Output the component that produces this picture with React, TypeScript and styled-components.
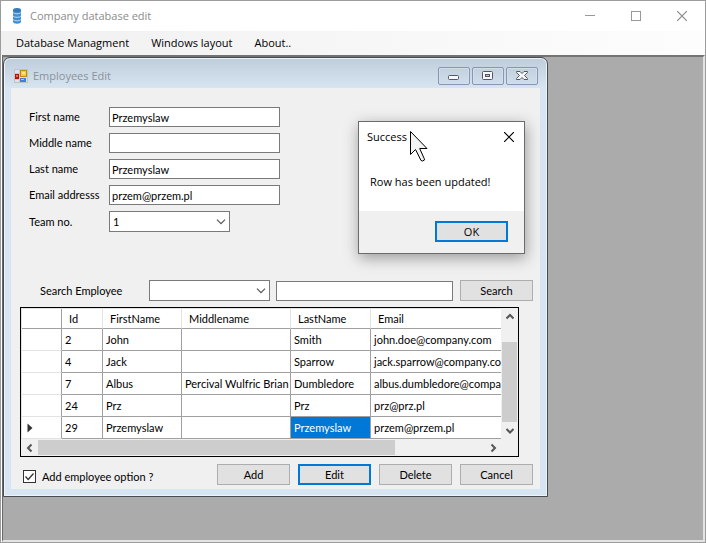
import React, { useState } from 'react';
import styled, { createGlobalStyle, css } from 'styled-components';

const GlobalStyle = createGlobalStyle`
  *, *::before, *::after { box-sizing: border-box; }
  body { margin: 0; }
  body, button, input, select, table {
    font-family: Lato, "Liberation Sans", sans-serif;
    font-size: 11px;
    line-height: 14px;
    color: #000;
  }
`;

const systemFont = css`
  font-family: "Open Sans", "Noto Sans", sans-serif;
`;

const AppFrame = styled.div`
  display: flex;
  flex-direction: column;
  min-height: 100vh;
  border: 1px solid #9c9c9c;
  background: #fff;
`;

const TitleBar = styled.header`
  ${systemFont}
  display: flex;
  align-items: center;
  height: 30px;
  padding-left: 9px;
  background: #fff;
`;

const AppTitle = styled.h1`
  flex: 1;
  margin: 0 0 0 6px;
  font-size: 11px;
  line-height: 16px;
  font-weight: 400;
  color: #8c8c8c;
`;

const CaptionButton = styled.button`
  display: flex;
  align-items: center;
  justify-content: center;
  width: 46px;
  height: 28px;
  padding: 0;
  border: 0;
  background: transparent;
`;

const MenuBar = styled.nav`
  ${systemFont}
  display: flex;
  align-items: center;
  height: 24px;
  padding-left: 11px;
  background: linear-gradient(to right, #f0f0f0, #fdfdfd);
`;

const MenuItem = styled.button`
  font-family: inherit;
  font-size: 11px;
  line-height: 16px;
  height: 20px;
  margin-right: 14px;
  padding: 0 4px;
  border: 0;
  background: transparent;
`;

const Workspace = styled.main`
  position: relative;
  flex: 1;
  margin-left: 1px;
  border-style: solid;
  border-width: 2px 2px 2px 1px;
  border-color: #737373 #e3e3e3 #e3e3e3 #696969;
  background: #ababab;
`;

const ChildWindow = styled.section`
  position: absolute;
  left: 0;
  top: 0;
  width: 545px;
  padding: 0 7px 7px;
  border: 1px solid #484b50;
  border-radius: 7px 7px 0 0;
  background: linear-gradient(to bottom, #bfcddb 0, #d7e4f2 30px);
  box-shadow: inset 0 0 0 1px #edf3fa;
`;

const ChildTitleBar = styled.header`
  ${systemFont}
  display: flex;
  align-items: center;
  height: 30px;
  padding: 6px 2px 0 3px;
`;

const ChildTitle = styled.h2`
  flex: 1;
  margin: 0 0 0 5px;
  font-size: 11px;
  line-height: 16px;
  font-weight: 400;
  color: #8b929a;
`;

const ChildControls = styled.div`
  display: flex;
  gap: 2px;
`;

const ChildButton = styled.button`
  display: flex;
  align-items: center;
  justify-content: center;
  width: 32px;
  height: 18px;
  padding: 0;
  border: 1px solid #8497b5;
  border-radius: 2px;
  background: linear-gradient(to bottom, #c3d0de, #d0deec);
  box-shadow: inset 0 0 0 1px #d3deea;
`;

const Client = styled.div`
  padding: 19px 7px 4px 9px;
  background: #f0f0f0;
`;

const Form = styled.form`
  display: grid;
  grid-template-columns: 80px 171px;
  row-gap: 6px;
  align-items: center;
  margin-left: 9px;
`;

const Label = styled.label`
  white-space: nowrap;
`;

const TextInput = styled.input`
  width: 100%;
  min-width: 0;
  height: 20px;
  padding: 0 2px;
  border: 1px solid #7a7a7a;
  border-radius: 0;
  background: #fff;
`;

const SelectBox = styled.div`
  position: relative;
  width: 121px;
  flex: none;

  svg {
    position: absolute;
    right: 4px;
    top: 8px;
    pointer-events: none;
  }
`;

const Select = styled.select`
  display: block;
  appearance: none;
  width: 100%;
  height: 21px;
  padding: 0 18px 0 3px;
  border: 1px solid #7a7a7a;
  border-radius: 0;
  background: #fff;
`;

const PushButton = styled.button<{ $primary?: boolean }>`
  width: 73px;
  height: 21px;
  flex: none;
  padding: 0;
  border: ${(p) => (p.$primary ? '2px solid #0078d7' : '1px solid #adadad')};
  background: #e1e1e1;
`;

const SearchRow = styled.form`
  display: flex;
  align-items: center;
  margin-top: 48px;
  padding-left: 20px;
`;

const SearchLabel = styled.label`
  width: 109px;
  white-space: nowrap;
`;

const SearchField = styled.div`
  flex: 1;
  margin: 0 7px 0 6px;
`;

const DataGrid = styled.div`
  margin: 6px 14px 0 0;
  border: 1px solid #000;
  background: #f0f0f0;
`;

const GridBody = styled.div`
  display: flex;
`;

const Viewport = styled.div`
  flex: 1;
  min-width: 0;
  overflow: hidden;
  border-top: 1px solid #e3e3e3;
  border-left: 1px solid #e3e3e3;
  background: #fff;
`;

const Table = styled.table`
  width: 560px;
  table-layout: fixed;
  border-collapse: separate;
  border-spacing: 0;
`;

const HeadCell = styled.th<{ $width: number; $corner?: boolean }>`
  width: ${(p) => p.$width}px;
  height: 20px;
  padding: 0 7px;
  border-right: 1px solid ${(p) => (p.$corner ? '#a0a0a0' : '#e3e3e3')};
  border-bottom: 1px solid #a0a0a0;
  font-weight: 400;
  text-align: left;
  white-space: nowrap;
`;

const RowHead = styled.th`
  height: 22px;
  padding: 0 5px;
  border-right: 1px solid #a0a0a0;
  border-bottom: 1px solid #e3e3e3;

  svg { display: block; }
`;

const Cell = styled.td<{ $selected?: boolean }>`
  height: 22px;
  padding: 0 3px;
  overflow: hidden;
  border-right: 1px solid #a0a0a0;
  border-bottom: 1px solid #a0a0a0;
  white-space: nowrap;
  color: ${(p) => (p.$selected ? '#fff' : '#000')};
  background: ${(p) => (p.$selected ? '#0078d7' : '#fff')};
`;

const ScrollBar = styled.div<{ $vertical?: boolean }>`
  display: flex;
  flex-direction: ${(p) => (p.$vertical ? 'column' : 'row')};
  flex: none;
  ${(p) => (p.$vertical ? 'width: 17px; padding: 0 1px;' : 'height: 17px; padding: 1px 17px 1px 0;')}
  background: #f0f0f0;
`;

const ScrollArrow = styled.button`
  display: flex;
  align-items: center;
  justify-content: center;
  flex: 0 0 17px;
  padding: 0;
  border: 0;
  background: transparent;
`;

const ScrollTrack = styled.div<{ $vertical?: boolean }>`
  display: flex;
  flex: 1;
  flex-direction: ${(p) => (p.$vertical ? 'column' : 'row')};
  justify-content: ${(p) => (p.$vertical ? 'flex-end' : 'flex-start')};
`;

const ScrollThumb = styled.div<{ $share: number }>`
  flex: 0 0 ${(p) => p.$share}%;
  background: #cdcdcd;
`;

const ActionRow = styled.div`
  display: flex;
  align-items: center;
  gap: 8px;
  margin-top: 7px;
`;

const CheckLabel = styled.label`
  display: flex;
  flex: 1;
  align-items: center;
  gap: 6px;
  padding: 4px 0 0 3px;
`;

const CheckMark = styled.span`
  display: grid;
  width: 13px;
  height: 13px;

  > * { grid-area: 1 / 1; }
  svg { pointer-events: none; }
`;

const CheckBox = styled.input`
  appearance: none;
  width: 13px;
  height: 13px;
  margin: 0;
  border: 1px solid #333;
  background: #fff;

  &:not(:checked) + svg { visibility: hidden; }
`;

const Dialog = styled.div`
  ${systemFont}
  position: absolute;
  left: 354px;
  top: 63px;
  width: 167px;
  border: 1px solid #6b6b6b;
  background: #fff;
  box-shadow: 1px 4px 14px rgba(0, 0, 0, 0.36);
`;

const DialogHeader = styled.header`
  display: flex;
  align-items: center;
  height: 29px;
  padding-left: 8px;
`;

const DialogTitle = styled.h3`
  flex: 1;
  margin: 0;
  font-size: 11px;
  line-height: 16px;
  font-weight: 400;
`;

const DialogClose = styled(CaptionButton)`
  width: 31px;
`;

const DialogMessage = styled.p`
  margin: 0;
  padding: 23px 0 21px 11px;
  font-size: 11px;
  line-height: 16px;
  white-space: nowrap;
`;

const DialogFooter = styled.footer`
  display: flex;
  justify-content: flex-end;
  padding: 10px 16px 11px 0;
  background: #f0f0f0;
`;

const DialogButton = styled(PushButton)`
  font-family: inherit;
`;

const Pointer = styled.svg`
  position: absolute;
  left: 51px;
  top: 9px;
  pointer-events: none;
`;

const DatabaseIcon = () => (
  <svg width="14" height="18" viewBox="0 0 14 18" aria-hidden="true">
    <path d="M3 3v11.500c0 3 8 3 8 0V3z" fill="#3f8fd0" />
    <ellipse cx="7" cy="3" rx="4" ry="2" fill="#3579b8" />
    <path d="M3 5.500c1 1.800 7 1.800 8 0M3 9c1 1.800 7 1.800 8 0M3 12.500c1 1.800 7 1.800 8 0" fill="none" stroke="#d9eaf8" strokeWidth=".8" />
  </svg>
);

const FormIcon = () => (
  <svg width="14" height="14" viewBox="0 0 14 14" aria-hidden="true">
    <rect x=".5" y=".5" width="13" height="13" fill="#dde3ea" stroke="#bfc3c8" />
    <path d="M5.500 1v12M1 4.500h5M1 10.500h5" stroke="#c3c8ce" />
    <rect x="1" y="5" width="4" height="5" fill="#b3140c" />
    <rect x="2" y="6" width="2" height="2" fill="#e8695c" />
    <rect x="6.500" y="1.500" width="6" height="6" fill="#fbc93c" stroke="#c08a16" />
    <rect x="8" y="3" width="3" height="2" fill="#ffe795" />
    <rect x="6" y="9" width="6" height="4" fill="#3f80db" />
    <rect x="7" y="10" width="3" height="1" fill="#a4c8fb" />
  </svg>
);

const MinimizeIcon = () => (
  <svg width="10" height="10" aria-hidden="true"><path d="M0 4.500h10" stroke="#999" /></svg>
);

const MaximizeIcon = () => (
  <svg width="10" height="10" aria-hidden="true"><rect x=".5" y=".5" width="9" height="9" fill="none" stroke="#999" /></svg>
);

const CloseIcon = ({ color }: { color: string }) => (
  <svg width="10" height="10" aria-hidden="true"><path d="M0 0l10 10M10 0L0 10" stroke={color} strokeWidth="1.200" /></svg>
);

const ChildMinIcon = () => (
  <svg width="12" height="12" aria-hidden="true">
    <rect x=".5" y="5.500" width="10" height="4" rx="1" fill="#f7f7f7" stroke="#535666" />
  </svg>
);

const ChildMaxIcon = () => (
  <svg width="12" height="12" aria-hidden="true">
    <rect x=".5" y="1.500" width="10" height="8" rx="1" fill="#f7f7f7" stroke="#535666" />
    <rect x="3.500" y="4.500" width="4" height="2" fill="#b8c5d4" stroke="#535666" />
  </svg>
);

const ChildCloseIcon = () => (
  <svg width="12" height="12" aria-hidden="true">
    <path d="M.5 1.500h3.500l2 2 2-2h3.500v1L8.500 5.500l3 3v1H8l-2-2-2 2H.5v-1l3-3-3-3z" fill="#f7f7f7" stroke="#535666" />
  </svg>
);

const ChevronDown = () => (
  <svg width="10" height="6" aria-hidden="true"><path d="M1 .7l4 4 4-4" fill="none" stroke="#555" strokeWidth="1.200" /></svg>
);

const arrowPaths = {
  up: 'M1.500 6.500l3.500-3.500 3.500 3.500',
  down: 'M1.500 3l3.500 3.500L8.500 3',
  left: 'M6.500 1.500L3 5l3.500 3.500',
  right: 'M3.500 1.500L7 5 3.500 8.500',
};

const ArrowIcon = ({ to }: { to: keyof typeof arrowPaths }) => (
  <svg width="10" height="10" aria-hidden="true"><path d={arrowPaths[to]} fill="none" stroke="#555" strokeWidth="2" /></svg>
);

const columns = [
  { name: 'Id', width: 41 },
  { name: 'FirstName', width: 79 },
  { name: 'Middlename', width: 109 },
  { name: 'LastName', width: 80 },
  { name: 'Email', width: 211 },
];

const rows = [
  ['2', 'John', '', 'Smith', 'john.doe@company.com'],
  ['4', 'Jack', '', 'Sparrow', 'jack.sparrow@company.com'],
  ['7', 'Albus', 'Percival Wulfric Brian', 'Dumbledore', 'albus.dumbledore@company.com'],
  ['24', 'Prz', '', 'Prz', 'prz@prz.pl'],
  ['29', 'Przemyslaw', '', 'Przemyslaw', 'przem@przem.pl'],
];

const fields = [
  { id: 'first', label: 'First name', value: 'Przemyslaw' },
  { id: 'middle', label: 'Middle name', value: '' },
  { id: 'last', label: 'Last name', value: 'Przemyslaw' },
  { id: 'email', label: 'Email addresss', value: 'przem@przem.pl' },
];

const EmployeeGrid = () => (
  <DataGrid>
    <GridBody>
      <Viewport>
        <Table>
          <thead>
            <tr>
              <HeadCell $width={40} $corner aria-label="Row" />
              {columns.map((c) => (
                <HeadCell key={c.name} $width={c.width}>{c.name}</HeadCell>
              ))}
            </tr>
          </thead>
          <tbody>
            {rows.map((row, r) => (
              <tr key={row[0]}>
                <RowHead scope="row">
                  {r === 4 && (
                    <svg width="6" height="10" aria-label="Current row"><path d="M.5.5L5.500 5l-5 4.500z" fill="#333" /></svg>
                  )}
                </RowHead>
                {row.map((text, c) => (
                  <Cell key={columns[c].name} $selected={r === 4 && c === 3}>{text}</Cell>
                ))}
              </tr>
            ))}
          </tbody>
        </Table>
      </Viewport>
      <ScrollBar $vertical>
        <ScrollArrow type="button" aria-label="Scroll up"><ArrowIcon to="up" /></ScrollArrow>
        <ScrollTrack $vertical><ScrollThumb $share={83} /></ScrollTrack>
        <ScrollArrow type="button" aria-label="Scroll down"><ArrowIcon to="down" /></ScrollArrow>
      </ScrollBar>
    </GridBody>
    <ScrollBar>
      <ScrollArrow type="button" aria-label="Scroll left"><ArrowIcon to="left" /></ScrollArrow>
      <ScrollTrack><ScrollThumb $share={80} /></ScrollTrack>
      <ScrollArrow type="button" aria-label="Scroll right"><ArrowIcon to="right" /></ScrollArrow>
    </ScrollBar>
  </DataGrid>
);

const SuccessDialog = () => (
  <Dialog role="dialog" aria-labelledby="dialog-title">
    <DialogHeader>
      <DialogTitle id="dialog-title">Success</DialogTitle>
      <DialogClose type="button" aria-label="Close message"><CloseIcon color="#000" /></DialogClose>
    </DialogHeader>
    <DialogMessage>Row has been updated!</DialogMessage>
    <DialogFooter>
      <DialogButton type="button" $primary>OK</DialogButton>
    </DialogFooter>
    <Pointer width="20" height="32" viewBox="0 0 20 32" aria-hidden="true">
      <path d="M.5.5v23l5-5 5.500 11 1.500.500 2-1-.3-1.500-4.500-10h7.300z" fill="#f3f3f3" stroke="#000" />
    </Pointer>
  </Dialog>
);

export default function App() {
  const [adding, setAdding] = useState(true);
  return (
    <>
      <GlobalStyle />
      <AppFrame>
        <TitleBar>
          <DatabaseIcon />
          <AppTitle>Company database edit</AppTitle>
          <CaptionButton type="button" aria-label="Minimize"><MinimizeIcon /></CaptionButton>
          <CaptionButton type="button" aria-label="Maximize"><MaximizeIcon /></CaptionButton>
          <CaptionButton type="button" aria-label="Close"><CloseIcon color="#8a8a8a" /></CaptionButton>
        </TitleBar>
        <MenuBar>
          <MenuItem type="button">Database Managment</MenuItem>
          <MenuItem type="button">Windows layout</MenuItem>
          <MenuItem type="button">About..</MenuItem>
        </MenuBar>
        <Workspace>
          <ChildWindow>
            <ChildTitleBar>
              <FormIcon />
              <ChildTitle>Employees Edit</ChildTitle>
              <ChildControls>
                <ChildButton type="button" aria-label="Minimize form"><ChildMinIcon /></ChildButton>
                <ChildButton type="button" aria-label="Maximize form"><ChildMaxIcon /></ChildButton>
                <ChildButton type="button" aria-label="Close form"><ChildCloseIcon /></ChildButton>
              </ChildControls>
            </ChildTitleBar>
            <Client>
              <Form>
                {fields.map((f) => (
                  <React.Fragment key={f.id}>
                    <Label htmlFor={f.id}>{f.label}</Label>
                    <TextInput id={f.id} defaultValue={f.value} />
                  </React.Fragment>
                ))}
                <Label htmlFor="team">Team no.</Label>
                <SelectBox>
                  <Select id="team" defaultValue="1"><option>1</option></Select>
                  <ChevronDown />
                </SelectBox>
              </Form>
              <SearchRow onSubmit={(e) => e.preventDefault()}>
                <SearchLabel htmlFor="column">Search Employee</SearchLabel>
                <SelectBox>
                  <Select id="column" defaultValue=""><option value="" /></Select>
                  <ChevronDown />
                </SelectBox>
                <SearchField><TextInput aria-label="Search text" /></SearchField>
                <PushButton type="submit">Search</PushButton>
              </SearchRow>
              <EmployeeGrid />
              <ActionRow>
                <CheckLabel>
                  <CheckMark>
                    <CheckBox type="checkbox" checked={adding} onChange={(e) => setAdding(e.target.checked)} />
                    <svg width="13" height="13" aria-hidden="true"><path d="M2.500 6.500l2.700 3 5.300-6" fill="none" stroke="#333" strokeWidth="1.300" /></svg>
                  </CheckMark>
                  Add employee option ?
                </CheckLabel>
                <PushButton type="button">Add</PushButton>
                <PushButton type="button" $primary>Edit</PushButton>
                <PushButton type="button">Delete</PushButton>
                <PushButton type="button">Cancel</PushButton>
              </ActionRow>
            </Client>
            <SuccessDialog />
          </ChildWindow>
        </Workspace>
      </AppFrame>
    </>
  );
}
